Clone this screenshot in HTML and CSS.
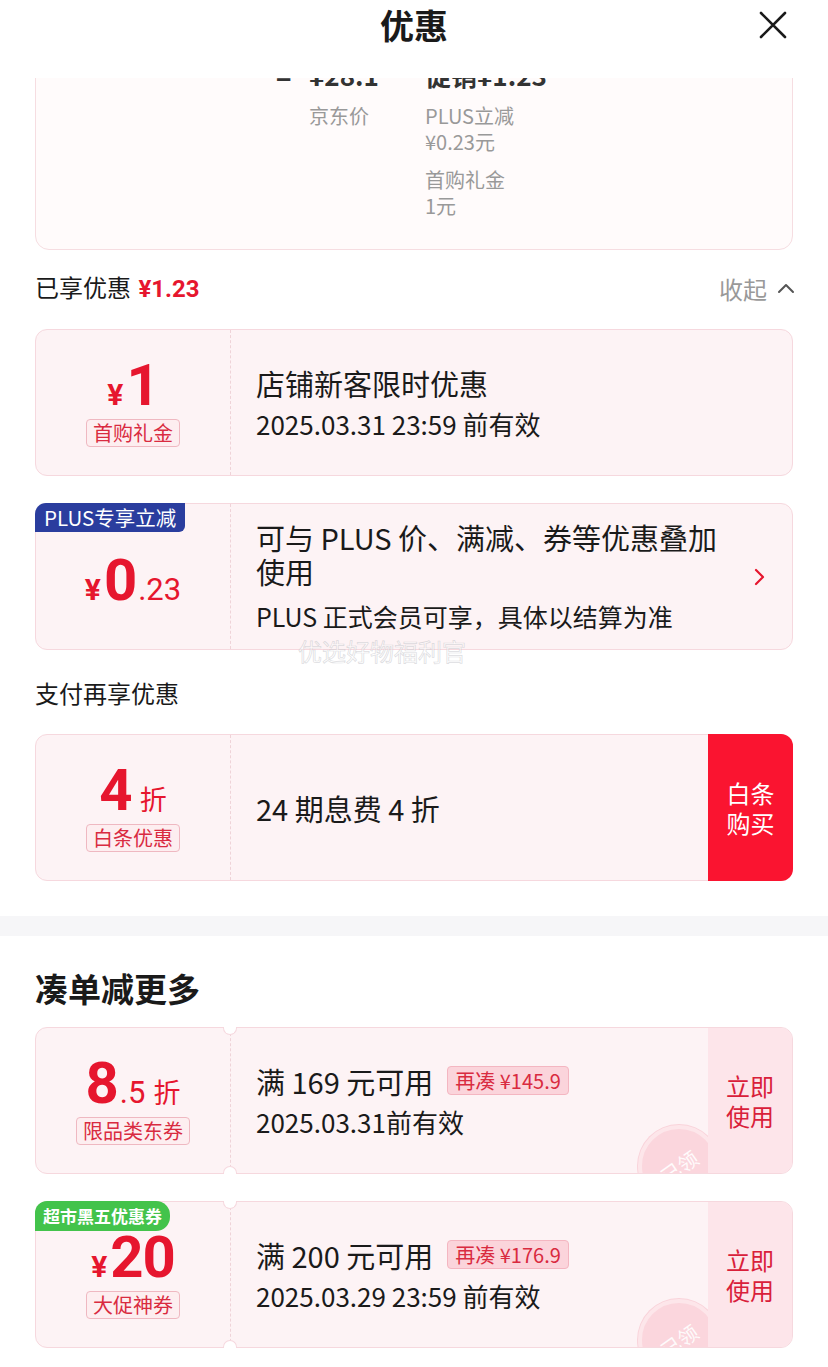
FILE: index.html
```html
<!DOCTYPE html>
<html lang="zh-CN">
<head>
<meta charset="utf-8">
<title>优惠</title>
<link rel="stylesheet" href="styles.css">
</head>
<body>
<div class="page">
  <header class="topbar">
    <div></div>
    <h1 class="title">优惠</h1>
    <button class="close" aria-label="关闭">
      <svg width="28" height="28" viewBox="0 0 28 28"><path d="M2 2 L26 26 M26 2 L2 26" stroke="#1a1a1a" stroke-width="2.6" stroke-linecap="round" fill="none"/></svg>
    </button>
  </header>

  <div class="clip">
    <div class="price-card">
      <div class="pc-col pc-eq"><div class="pc-big">=</div></div>
      <div class="pc-col pc-jd">
        <div class="pc-big">¥28.1</div>
        <div class="pc-label">京东价</div>
      </div>
      <div class="pc-col pc-disc">
        <div class="pc-big">促销¥1.23</div>
        <div class="pc-label">PLUS立减<br>¥0.23元</div>
        <div class="pc-label pc-gap">首购礼金<br>1元</div>
      </div>
    </div>
  </div>

  <div class="sec-row first">
    <div class="sec-title">已享优惠 <span class="red-b">¥1.23</span></div>
    <div class="collapse">收起
      <svg width="18" height="12" viewBox="0 0 18 12"><polyline points="2,10 9,3 16,10" fill="none" stroke="#555" stroke-width="2" stroke-linecap="round" stroke-linejoin="round"/></svg>
    </div>
  </div>

  <div class="coupon">
    <div class="c-left">
      <div class="amt"><span class="cur">¥</span><span class="big">1</span></div>
      <div class="tag">首购礼金</div>
    </div>
    <div class="c-mid">
      <div class="c-title">店铺新客限时优惠</div>
      <div class="c-sub">2025.03.31 23:59 前有效</div>
    </div>
  </div>

  <div class="coupon c2">
    <div class="badge-plus">PLUS专享立减</div>
    <div class="c-left">
      <div class="amt amt-plus"><span class="cur">¥</span><span class="big">0</span><span class="dec">.23</span></div>
    </div>
    <div class="c-mid c-mid-row">
      <div class="c-text">
        <div class="c-title">可与 PLUS 价、满减、券等优惠叠加<br>使用</div>
        <div class="c-sub sub-gap">PLUS 正式会员可享，具体以结算为准</div>
      </div>
      <svg class="chev" width="12" height="18" viewBox="0 0 12 18"><polyline points="3,2 10,9 3,16" fill="none" stroke="#e6162e" stroke-width="2.2" stroke-linecap="round" stroke-linejoin="round"/></svg>
    </div>
  </div>

  <div class="sec-row pay">
    <div class="sec-title">支付再享优惠</div>
  </div>

  <div class="coupon c3">
    <div class="c-left">
      <div class="amt"><span class="big">4</span><span class="unit">折</span></div>
      <div class="tag">白条优惠</div>
    </div>
    <div class="c-mid">
      <div class="c-title">24 期息费 4 折</div>
    </div>
    <div class="c-btn">白条<br>购买</div>
  </div>

  <div class="band"></div>

  <h2 class="more-title">凑单减更多</h2>

  <div class="coupon c4">
    <span class="notch top"></span><span class="notch bottom"></span>
    <div class="stamp-wrap"><div class="stamp"><span>已领</span></div></div>
    <div class="c-left">
      <div class="amt"><span class="big">8</span><span class="dec">.5</span><span class="unit">折</span></div>
      <div class="tag">限品类东券</div>
    </div>
    <div class="c-mid">
      <div class="c-title">满 169 元可用 <span class="gap-tag">再凑 ¥145.9</span></div>
      <div class="c-sub">2025.03.31前有效</div>
    </div>
    <div class="c-use">立即<br>使用</div>
  </div>

  <div class="coupon c4 c5">
    <span class="notch top"></span><span class="notch bottom"></span>
    <div class="stamp-wrap"><div class="stamp"><span>已领</span></div></div>
    <div class="badge-green">超市黑五优惠券</div>
    <div class="c-left">
      <div class="amt amt-20"><span class="cur">¥</span><span class="big">20</span></div>
      <div class="tag">大促神券</div>
    </div>
    <div class="c-mid">
      <div class="c-title">满 200 元可用 <span class="gap-tag">再凑 ¥176.9</span></div>
      <div class="c-sub">2025.03.29 23:59 前有效</div>
    </div>
    <div class="c-use">立即<br>使用</div>
  </div>

  <div class="watermark">优选好物福利官</div>
</div>
</body>
</html>
```

FILE: styles.css
```css
* { box-sizing: border-box; }
body {
  margin: 0;
  background: #fff;
  font-family: "Noto Sans CJK SC", "Noto Sans", sans-serif;
  color: #1a1a1a;
}
.page {
  width: 828px;
  height: 1367px;
  position: relative;
  overflow: hidden;
}

/* header */
.topbar {
  height: 78px;
  display: grid;
  grid-template-columns: 1fr auto 1fr;
  align-items: start;
  background: #fff;
}
.title {
  margin: 0;
  font-size: 34px;
  font-weight: 700;
  line-height: 50px;
}
.close {
  justify-self: end;
  margin: 11px 41px 0 0;
  width: 28px;
  height: 28px;
  padding: 0;
  border: 0;
  background: none;
}

/* clipped price card */
.clip {
  height: 174px;
  overflow: hidden;
}
.price-card {
  margin: -40px 35px 0;
  height: 212px;
  border: 1.5px solid #f6dde1;
  border-radius: 14px;
  background: #fffbfb;
  display: flex;
  padding: 19px 0 0 240px;
}
.pc-col { display: flex; flex-direction: column; }
.pc-eq { width: 33px; }
.pc-jd { width: 116px; }
.pc-big {
  font-size: 26px;
  font-weight: 700;
  line-height: 34px;
  color: #333;
  white-space: nowrap;
}
.pc-label {
  margin-top: 11px;
  font-size: 20px;
  line-height: 26px;
  color: #999;
}
.pc-label.pc-gap { margin-top: 12px; }

/* section rows */
.sec-row {
  margin: 20px 35px 25px;
  height: 32px;
  display: flex;
  justify-content: space-between;
  align-items: center;
}
.sec-row.pay { margin: 22px 35px 25px; }
.sec-title {
  font-size: 24px;
  line-height: 32px;
  color: #1a1a1a;
}
.red-b {
  color: #e6162e;
  font-weight: 700;
  font-family: "Roboto", "Noto Sans CJK SC", sans-serif;
  margin-left: 2px;
}
.collapse {
  font-size: 24px;
  color: #999;
  display: flex;
  align-items: center;
  gap: 10px;
  margin-right: -2px;
}

/* coupon */
.coupon {
  position: relative;
  margin: 0 35px 27px;
  height: 147px;
  border: 1px solid #f6d8de;
  border-radius: 12px;
  background: #fdf3f5;
  display: grid;
  grid-template-columns: 194px 1fr;
}
.coupon.c3, .coupon.c4 { grid-template-columns: 194px 1fr 84px; }
.c-left {
  display: flex;
  flex-direction: column;
  align-items: center;
  justify-content: center;
}
.amt {
  display: flex;
  align-items: baseline;
  height: 52px;
  line-height: 52px;
  color: #e6162e;
  font-family: "Roboto", "Liberation Sans", sans-serif;
  font-weight: 700;
}
.amt .cur { font-size: 30px; margin-right: 3px; }
.amt .big { font-size: 58px; letter-spacing: -1px; }
.amt .dec { font-size: 31px; font-weight: 400; margin-left: 2px; }
.amt .unit {
  font-size: 27px;
  font-weight: 400;
  margin-left: 8px;
  font-family: "Noto Sans CJK SC", sans-serif;
}
.amt-plus { margin-top: 6px; }
.tag {
  margin-top: 8px;
  height: 28px;
  line-height: 26px;
  padding: 0 6px;
  font-size: 20px;
  color: #d92b40;
  background: #fdeef0;
  border: 1px solid #efb8c1;
  border-radius: 4px;
}
.c-mid {
  border-left: 1px dashed #efd3d8;
  padding-left: 25px;
  display: flex;
  flex-direction: column;
  justify-content: center;
}
.c-title {
  font-size: 29px;
  line-height: 36px;
  color: #1a1a1a;
  display: flex;
  align-items: center;
  white-space: nowrap;
}
.c2 .c-title { display: block; line-height: 34px; white-space: normal; }
.c-sub {
  margin-top: 6px;
  font-size: 26px;
  line-height: 34px;
  color: #1a1a1a;
  white-space: nowrap;
}
.c-sub.sub-gap { margin-top: 11px; font-size: 25px; }
.c-mid-row {
  flex-direction: row;
  align-items: center;
  justify-content: space-between;
}
.chev { margin-right: 27px; flex: none; }

.badge-plus {
  position: absolute;
  left: -1px;
  top: -1px;
  height: 29px;
  padding: 0 9px;
  line-height: 29px;
  font-size: 20.5px;
  color: #fff;
  background: #2a3d9e;
  border-radius: 11px 0 6px 0;
  z-index: 1;
}
.badge-green {
  position: absolute;
  left: -1px;
  top: -1px;
  height: 30px;
  padding: 0 8px;
  line-height: 30px;
  font-size: 17px;
  font-weight: 700;
  color: #fff;
  background: #43c34b;
  border-radius: 12px 14px 14px 0;
  z-index: 2;
}

.c-btn {
  margin: -1px -1px -1px 0;
  background: #fa1430;
  color: #fff;
  border-radius: 0 12px 12px 0;
  font-size: 24px;
  line-height: 30px;
  display: flex;
  align-items: center;
  justify-content: center;
  text-align: center;
}

.band {
  height: 20px;
  background: #f6f6f8;
  margin-top: 35px;
}
.more-title {
  margin: 30px 35px 17px;
  font-size: 33px;
  line-height: 44px;
  font-weight: 700;
}

.c-use {
  background: #fde5ea;
  border-radius: 0 11px 11px 0;
  color: #d9203a;
  font-size: 24px;
  line-height: 30px;
  display: flex;
  align-items: center;
  justify-content: center;
  text-align: center;
  position: relative;
  z-index: 1;
}
.gap-tag {
  margin-left: 14px;
  height: 29px;
  line-height: 27px;
  padding: 0 7px;
  font-size: 20px;
  color: #d92b40;
  background: #fbd4db;
  border: 1px solid #f4b6c1;
  border-radius: 4px;
}
.notch {
  position: absolute;
  left: 187px;
  width: 14px;
  height: 8px;
  background: #fff;
  border: 1px solid #f6d8de;
  z-index: 2;
}
.notch.top { top: -1px; border-top: 0; border-radius: 0 0 7px 7px; }
.notch.bottom { bottom: -1px; border-bottom: 0; border-radius: 7px 7px 0 0; }

.stamp-wrap {
  position: absolute;
  inset: 0;
  overflow: hidden;
  border-radius: 11px;
  pointer-events: none;
}
.stamp {
  position: absolute;
  left: 602px;
  top: 97px;
  width: 82px;
  height: 82px;
  border-radius: 50%;
  border: 4px solid #fde6ea;
  box-shadow: 0 0 0 1px #f9d3da;
  background: #fbd6dd;
  display: flex;
  align-items: center;
  justify-content: center;
}
.stamp span {
  color: #fff;
  font-size: 20px;
  transform: rotate(-35deg);
  opacity: .9;
}

.watermark {
  position: absolute;
  left: 298px;
  top: 635px;
  font-size: 24px;
  line-height: 32px;
  color: rgba(255, 255, 255, 0.55);
  -webkit-text-stroke: 0.7px rgba(190, 190, 196, 0.55);
  pointer-events: none;
}
```
